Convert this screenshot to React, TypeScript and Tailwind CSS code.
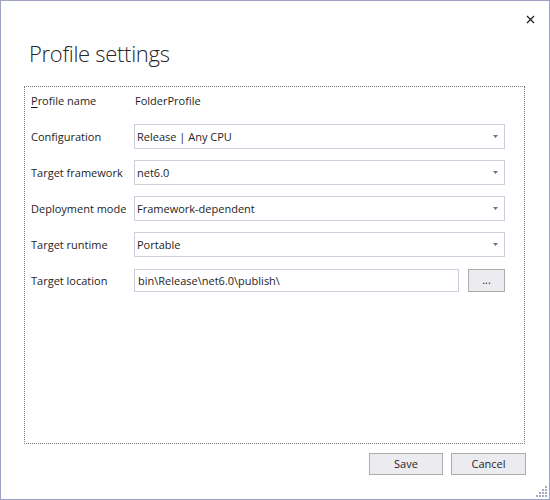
import React from "react";

const FONT = { fontFamily: '"Open Sans", "Noto Sans", sans-serif' };

const rows: { label: string; value: string; kind: "text" | "select" | "path" }[] = [
  { label: "Profile name", value: "FolderProfile", kind: "text" },
  { label: "Configuration", value: "Release | Any CPU", kind: "select" },
  { label: "Target framework", value: "net6.0", kind: "select" },
  { label: "Deployment mode", value: "Framework-dependent", kind: "select" },
  { label: "Target runtime", value: "Portable", kind: "select" },
  { label: "Target location", value: "bin\\Release\\net6.0\\publish\\", kind: "path" },
];

function Caret() {
  return (
    <svg width="5" height="3" viewBox="0 0 5 3" className="shrink-0">
      <path d="M0 0H5L2.5 3Z" fill="#717171" />
    </svg>
  );
}

function Grip() {
  const dots: [number, number][] = [];
  for (let r = 0; r < 4; r++) {
    for (let c = 3 - r; c < 4; c++) dots.push([c * 3, r * 3]);
  }
  return (
    <svg width="12" height="12" viewBox="0 0 12 12">
      {dots.map(([x, y]) => (
        <rect key={`${x}-${y}`} x={x} y={y} width="2" height="2" fill="#a3a8c4" />
      ))}
    </svg>
  );
}

export default function App() {
  return (
    <div
      className="relative flex h-[500px] w-[550px] flex-col border border-[#9ea3c1] bg-white text-[11px] text-[#1e1e1e]"
      style={FONT}
    >
      {/* title bar */}
      <div className="flex h-[36px] justify-end pr-[14px] pt-[14px]">
        <svg width="9" height="9" viewBox="0 0 9 9">
          <path d="M1 1L8 8M8 1L1 8" stroke="#1e1e1e" strokeWidth="1.2" />
        </svg>
      </div>
      <div className="h-[49px] pl-[28px] text-[22px] font-light leading-[32px] tracking-[-0.3px] text-[#262626]">
        Profile settings
      </div>

      {/* fields */}
      <div className="ml-[23px] mr-[24px] flex h-[358px] flex-col gap-[11px] border border-dotted border-[#7a7a7a] pl-[6px] pr-[19px] pt-px">
        {rows.map((row) => (
          <div key={row.label} className="flex h-[25px] items-center">
            <div className="mt-[2px] w-[103px] shrink-0 whitespace-nowrap">
              {row.label === "Profile name" ? (
                <>
                  <span className="underline underline-offset-2">P</span>rofile name
                </>
              ) : (
                row.label
              )}
            </div>
            {row.kind === "text" && <div className="mt-[2px] pl-px">{row.value}</div>}
            {row.kind === "select" && (
              <div className="flex h-[25px] flex-1 items-center justify-between border border-[#cccedb] pl-[2px] pr-[6px]">
                <span className="mt-[2px]">{row.value}</span>
                <Caret />
              </div>
            )}
            {row.kind === "path" && (
              <div className="flex flex-1 items-center gap-[9px]">
                <div className="flex h-[23px] flex-1 items-center border border-[#cccedb] pl-[3px]">
                  <span className="mt-[2px]">{row.value}</span>
                </div>
                <button className="h-[23px] w-[37px] border border-[#acacac] bg-[#ececf0] pb-[2px] leading-none">
                  ...
                </button>
              </div>
            )}
          </div>
        ))}
      </div>

      {/* footer */}
      <div className="mr-[23px] mt-[9px] flex justify-end gap-[8px]">
        <button className="h-[22px] w-[74px] border border-[#acacac] bg-[#ececf0]">Save</button>
        <button className="h-[22px] w-[75px] border border-[#acacac] bg-[#ececf0]">Cancel</button>
      </div>

      <div className="absolute bottom-px right-px">
        <Grip />
      </div>
    </div>
  );
}
